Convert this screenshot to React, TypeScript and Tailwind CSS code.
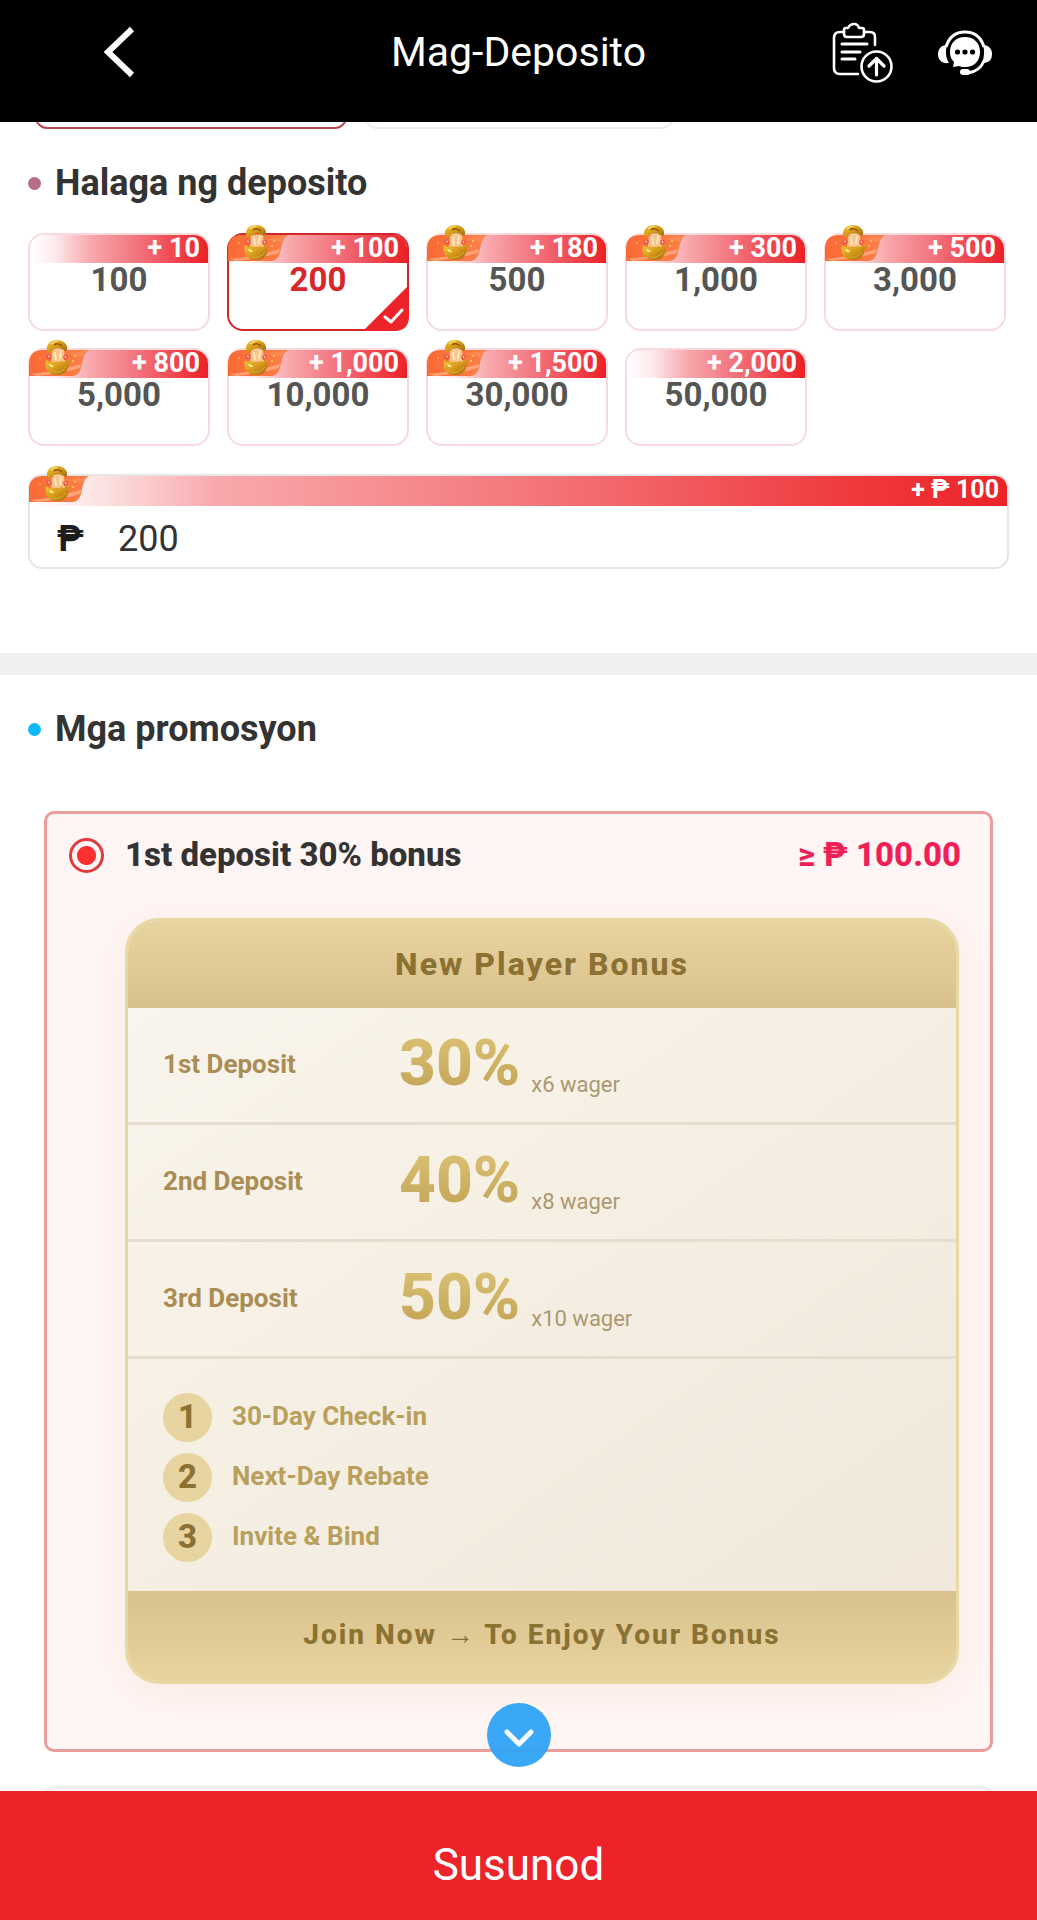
import { useId, useState } from "react"

type Amount = { value: string; bonus: string; pot: boolean }

const AMOUNTS: Amount[] = [
  { value: "100", bonus: "10", pot: false },
  { value: "200", bonus: "100", pot: true },
  { value: "500", bonus: "180", pot: true },
  { value: "1,000", bonus: "300", pot: true },
  { value: "3,000", bonus: "500", pot: true },
  { value: "5,000", bonus: "800", pot: true },
  { value: "10,000", bonus: "1,000", pot: true },
  { value: "30,000", bonus: "1,500", pot: true },
  { value: "50,000", bonus: "2,000", pot: false },
]

const TIERS = [
  { label: "1st Deposit", percent: "30%", wager: "x6 wager" },
  { label: "2nd Deposit", percent: "40%", wager: "x8 wager" },
  { label: "3rd Deposit", percent: "50%", wager: "x10 wager" },
]

const STEPS = ["30-Day Check-in", "Next-Day Rebate", "Invite & Bind"]

export default function App() {
  const [amount, setAmount] = useState("200")
  const selected = AMOUNTS.find((a) => a.value.replace(",", "") === amount)

  return (
    <div className="flex h-screen flex-col bg-white font-[Roboto,sans-serif] text-[#333]">
      <Header />

      <main className="min-h-0 flex-1 overflow-y-auto [scrollbar-width:none]">
        {/* payment channels, scrolled under the header */}
        <div className="flex h-[7px] items-end gap-[18px] overflow-hidden px-[35px]">
          <div className="h-20 w-[312px] shrink-0 rounded-xl border-2 border-[#b94a50]" />
          <div className="h-20 w-[309px] shrink-0 rounded-xl border-2 border-[#ededed]" />
        </div>

        <section className="px-7 pb-[84px]">
          <SectionTitle dot="bg-[#b56d88]">Halaga ng deposito</SectionTitle>

          <div className="mt-[30px] grid grid-cols-5 gap-[17px] pr-[3px]">
            {AMOUNTS.map((a) => (
              <AmountButton
                key={a.value}
                item={a}
                active={a === selected}
                onSelect={() => setAmount(a.value.replace(",", ""))}
              />
            ))}
          </div>

          <div className="relative mt-7 rounded-[14px] border-2 border-[#e6e6e6]">
            <div className="flex h-[30px] items-center justify-end rounded-t-xl bg-[linear-gradient(90deg,#fff_0%,#fce3e3_7%,#f9a9ad_19%,#f4777a_51%,#ef3a3e_84%,#ec2429_100%)] pr-2 pb-0.5 text-[25px] font-bold text-white">
              + ₱ {selected?.bonus ?? "0"}
            </div>
            <PotBadge />
            <label className="flex h-[61px] items-center pt-1 pl-[27px]">
              <span className="w-[61px] text-[36px] font-bold text-[#1c1c1c]">₱</span>
              <input
                value={amount}
                onChange={(e) => setAmount(e.target.value)}
                aria-label="Halaga ng deposito"
                inputMode="numeric"
                className="h-full min-w-0 flex-1 bg-transparent text-[36px] outline-none"
              />
            </label>
          </div>
        </section>

        <div className="h-[22px] bg-[#f0f0f0]" />

        <section className="px-7">
          <SectionTitle dot="bg-[#0db8fc]">Mga promosyon</SectionTitle>
          <div className="mt-[62px] px-4">
            <PromoCard />
            <div className="mt-[34px] h-24 rounded-[10px] border-[3px] border-[#f1eff0]" />
          </div>
        </section>
      </main>

      <button type="button" className="h-[129px] shrink-0 bg-[#ec2429] pt-[18px] text-[44px] text-white">
        Susunod
      </button>
    </div>
  )
}

function Header() {
  return (
    <header className="grid h-[122px] shrink-0 grid-cols-[1fr_auto_1fr] items-center bg-black pb-[17px] text-white">
      <button type="button" aria-label="Back" className="ml-[100px] justify-self-start">
        <svg width="38" height="54" viewBox="0 0 38 54" fill="none" stroke="currentColor" strokeWidth="6">
          <path d="M32 3 L8 26 L32 49" />
        </svg>
      </button>
      <h1 className="text-[41px]">Mag-Deposito</h1>
      <div className="mr-[45px] flex items-center gap-[44px] justify-self-end">
        <button type="button" aria-label="Records">
          <RecordsIcon />
        </button>
        <button type="button" aria-label="Support">
          <SupportIcon />
        </button>
      </div>
    </header>
  )
}

function SectionTitle({ dot, children }: { dot: string; children: string }) {
  return (
    <div className="flex items-center gap-[14px] pt-[34px]">
      <span className={`size-[13px] rounded-full ${dot}`} />
      <h2 className="text-[36px] leading-10 font-bold">{children}</h2>
    </div>
  )
}

function AmountButton({ item, active, onSelect }: { item: Amount; active: boolean; onSelect: () => void }) {
  return (
    <button
      type="button"
      aria-pressed={active}
      onClick={onSelect}
      className={`relative flex h-[98px] flex-col rounded-[16px] border-2 ${
        active ? "border-[#d3262c] text-[#d8262c]" : "border-[#f6dade] text-[#555]"
      }`}
    >
      <span className="flex h-7 w-full items-center justify-end rounded-t-[14px] bg-[linear-gradient(90deg,#fff_0%,#fdeaec_14%,#f8a8ac_34%,#f2707a_62%,#ec2026_100%)] pr-2 pb-0.5 text-[27px] font-bold text-white">
        + {item.bonus}
      </span>
      <span className="w-full text-center text-[33px] leading-[34px] font-bold">{item.value}</span>
      {item.pot && <PotBadge />}
      {active && <SelectedCorner />}
    </button>
  )
}

function SelectedCorner() {
  return (
    <svg className="absolute -right-0.5 -bottom-0.5" width="46" height="46" viewBox="0 0 46 46" fill="none">
      <path d="M46 0 V31 Q46 46 31 46 H0 Z" fill="#ec2429" />
      <path d="M22 32 L28 37 L39 25" stroke="#fff" strokeWidth="3" strokeLinecap="round" strokeLinejoin="round" />
    </svg>
  )
}

/* orange flag with the coin pot that sticks out above the ribbon */
function PotBadge() {
  const id = useId()
  return (
    <svg className="absolute -top-[12px] -left-px" width="62" height="40" viewBox="0 0 62 40" fill="none">
      <defs>
        <linearGradient id={`${id}flag`} x1="0" y1="0" x2="1" y2="0">
          <stop offset="0" stopColor="#fa6a35" />
          <stop offset="1" stopColor="#fb8048" />
        </linearGradient>
        <linearGradient id={`${id}gold`} x1="0" y1="0" x2="1" y2="1">
          <stop offset="0" stopColor="#f3c637" />
          <stop offset="0.5" stopColor="#d79a1b" />
          <stop offset="1" stopColor="#9a650c" />
        </linearGradient>
      </defs>
      <path d="M14 12 H60 Q56 14 54 21 L52 30 Q50 37 44 38 H0 V26 Q0 12 14 12 Z" fill={`url(#${id}flag)`} />
      <path d="M1 36 Q26 34 52 26 L51 30 Q30 36 8 38 Z" fill="#ffb78e" opacity="0.7" />
      <path d="M38 16 L56 13 L54 19 Z" fill="#fd935e" opacity="0.6" />
      {/* lid */}
      <path d="M18 12 C17 6 22 2 28 2 C34 2 39 6 38 11 C38 13 36 13 34 12 C31 10 26 10 23 13 C21 15 18 14 18 12 Z" fill={`url(#${id}gold)`} />
      <path d="M25 7 Q29 4 33 8" stroke="#8e5a08" strokeWidth="1.6" />
      <path d="M22 6 Q25 3 29 3" stroke="#ffe27a" strokeWidth="1.2" />
      {/* coins */}
      <path d="M23 13 L22 24 H36 L35 12 Q29 10 23 13 Z" fill="#f9c58a" />
      <path d="M26 14 L27 22 M32 13 L31 21" stroke="#ffe9c4" strokeWidth="1.8" />
      <path d="M17 17 Q22 15 23 19 Q22 23 18 21 Z" fill="#ea5a45" />
      <path d="M34 19 Q35 15 39 18 Q39 22 35 22 Z" fill="#ea5a45" />
      <path d="M19 18 L21 19 M36 18 L37 20" stroke="#ffd8c6" strokeWidth="1.2" />
      {/* bowl */}
      <path d="M17 22 Q20 25 24 23 Q28 26 32 23 Q36 25 40 21 C41 30 37 37 28 37 C19 37 15 30 17 22 Z" fill={`url(#${id}gold)`} />
      <path d="M20 26 Q21 30 25 29 Q24 26 20 26 Z" fill="#ffe98c" />
      <path d="M24 34 Q32 36 37 29" stroke="#e3ab30" strokeWidth="1" />
      <circle cx="44" cy="23" r="1" fill="#ffd35c" />
      <circle cx="46" cy="18" r="1" fill="#ffd35c" />
      <circle cx="11" cy="20" r="1" fill="#ffa258" />
    </svg>
  )
}

function PromoCard() {
  return (
    <div className="relative rounded-[10px] border-[3px] border-[#eb9c9c] bg-[#fff5f5] pr-[31px] pb-[65px]">
      <div className="-mr-0.5 flex h-20 items-center gap-[21px] pt-0.5 pl-[22px] text-[33px] font-extrabold">
        <input
          id="promo-first"
          type="radio"
          name="promo"
          defaultChecked
          className="size-[35px] shrink-0 appearance-none rounded-full border-[3px] border-[#e03c40] checked:bg-[radial-gradient(circle,#fd2f30_9px,transparent_10px)]"
        />
        <label htmlFor="promo-first" className="flex-1">
          1st deposit 30% bonus
        </label>
        <span className="text-[#ee2157]">≥ ₱ 100.00</span>
      </div>

      <div className="mt-6 ml-[78px] overflow-hidden rounded-[34px] border-[3px] border-[#e8d8a4] bg-[linear-gradient(145deg,#faf6ee_0%,#f5eee2_50%,#f0e7da_100%)] shadow-[0_8px_36px_rgba(212,185,110,0.15)]">
        <h3 className="bg-linear-to-b from-[#e8d4a0] to-[#d8c18d] text-center text-[32px] leading-[87px] font-extrabold tracking-[2px] text-[#8b7233]">
          New Player Bonus
        </h3>

        <ul>
          {TIERS.map((t) => (
            <li key={t.label} className="flex h-[117px] items-center border-b-[3px] border-[#e5dece] pb-0.5 pl-[35px]">
              <span className="w-[236px] text-[26px] font-bold text-[#aa8d54]">{t.label}</span>
              <span className="flex items-end gap-[11px]">
                <span className="bg-linear-to-b from-[#dcc275] to-[#c1a354] bg-clip-text text-[64px] leading-[64px] font-extrabold text-transparent">
                  {t.percent}
                </span>
                <span className="text-[22px] leading-[22px] text-[#ab9872]">{t.wager}</span>
              </span>
            </li>
          ))}
        </ul>

        <ol className="flex flex-col gap-[11px] px-[35px] pt-[34px] pb-[29px]">
          {STEPS.map((step, i) => (
            <li key={step} className="flex items-center gap-5 text-[26px] font-bold text-[#b99f5c]">
              <span className="flex size-[49px] items-center justify-center rounded-full bg-[#e8d4a0] pb-0.5 text-[33px] font-extrabold text-[#8b7233]">
                {i + 1}
              </span>
              <span className="pb-0.5">{step}</span>
            </li>
          ))}
        </ol>

        <a
          href="#join"
          className="block bg-linear-to-b from-[#d8c18d] to-[#e8d4a0] pb-0.5 text-center text-[28px] leading-[88px] font-extrabold tracking-[2px] text-[#8b7233]"
        >
          Join Now → To Enjoy Your Bonus
        </a>
      </div>

      <button
        type="button"
        aria-label="Show more"
        className="absolute -bottom-[18px] left-1/2 flex size-16 -translate-x-1/2 items-center justify-center rounded-full bg-[#2fa3f5]/95 pt-1.5"
      >
        <svg width="32" height="22" viewBox="0 0 32 22" fill="none" stroke="#f4faff" strokeWidth="5" strokeLinecap="round">
          <path d="M4 5 L16 17 L28 5" strokeLinejoin="round" />
        </svg>
      </button>
    </div>
  )
}

function RecordsIcon() {
  return (
    <svg
      width="62"
      height="62"
      viewBox="0 0 62 62"
      fill="none"
      stroke="currentColor"
      strokeWidth="2.6"
      strokeLinecap="round"
      strokeLinejoin="round"
    >
      <path d="M12 10 H8 Q2 10 2 16 V46 Q2 52 8 52 H26" />
      <path d="M32 10 H38 Q43 10 43 15 V23" />
      <path d="M12 8 Q12 6 14 6 H16 Q18 2 22 2 Q26 2 27 6 H30 Q32 6 32 8 V12 Q32 15 29 15 H15 Q12 15 12 12 Z" />
      <path d="M10 22 H35 M10 30 H28 M10 37 H23" strokeWidth="3" />
      <circle cx="44.500" cy="44.500" r="15" />
      <path d="M44.500 53 V37 M37 44 L44.500 36.500 L52 44" strokeWidth="3.200" />
    </svg>
  )
}

function SupportIcon() {
  return (
    <svg width="54" height="46" viewBox="0 0 54 46" fill="none">
      <path d="M8 17 C11 7 18 2 27 2 C36 2 43 7 46 17" stroke="#fff" strokeWidth="3" />
      <path d="M46 31 C43 38 38 42 30 43" stroke="#fff" strokeWidth="3" />
      <path d="M9 15 C3 15 0 19 0 24 C0 30 4 34 11 33 C8 28 7 22 9 15 Z" fill="#fff" />
      <path d="M45 15 C51 15 54 19 54 24 C54 30 51 33 44 33 C46 28 47 22 45 15 Z" fill="#fff" />
      <rect x="22" y="39" width="10" height="6" rx="3" fill="#fff" />
      <path d="M27 7 C36 7 42 13 42 22 C42 31 36 37 27 37 C25 37 23 37 21 36 L15 37 L16 32 C13 29 12 26 12 22 C12 13 18 7 27 7 Z" fill="#fff" />
      <g fill="#000">
        <circle cx="19.500" cy="22" r="2.600" />
        <circle cx="27" cy="22" r="2.600" />
        <circle cx="34.500" cy="22" r="2.600" />
      </g>
    </svg>
  )
}
